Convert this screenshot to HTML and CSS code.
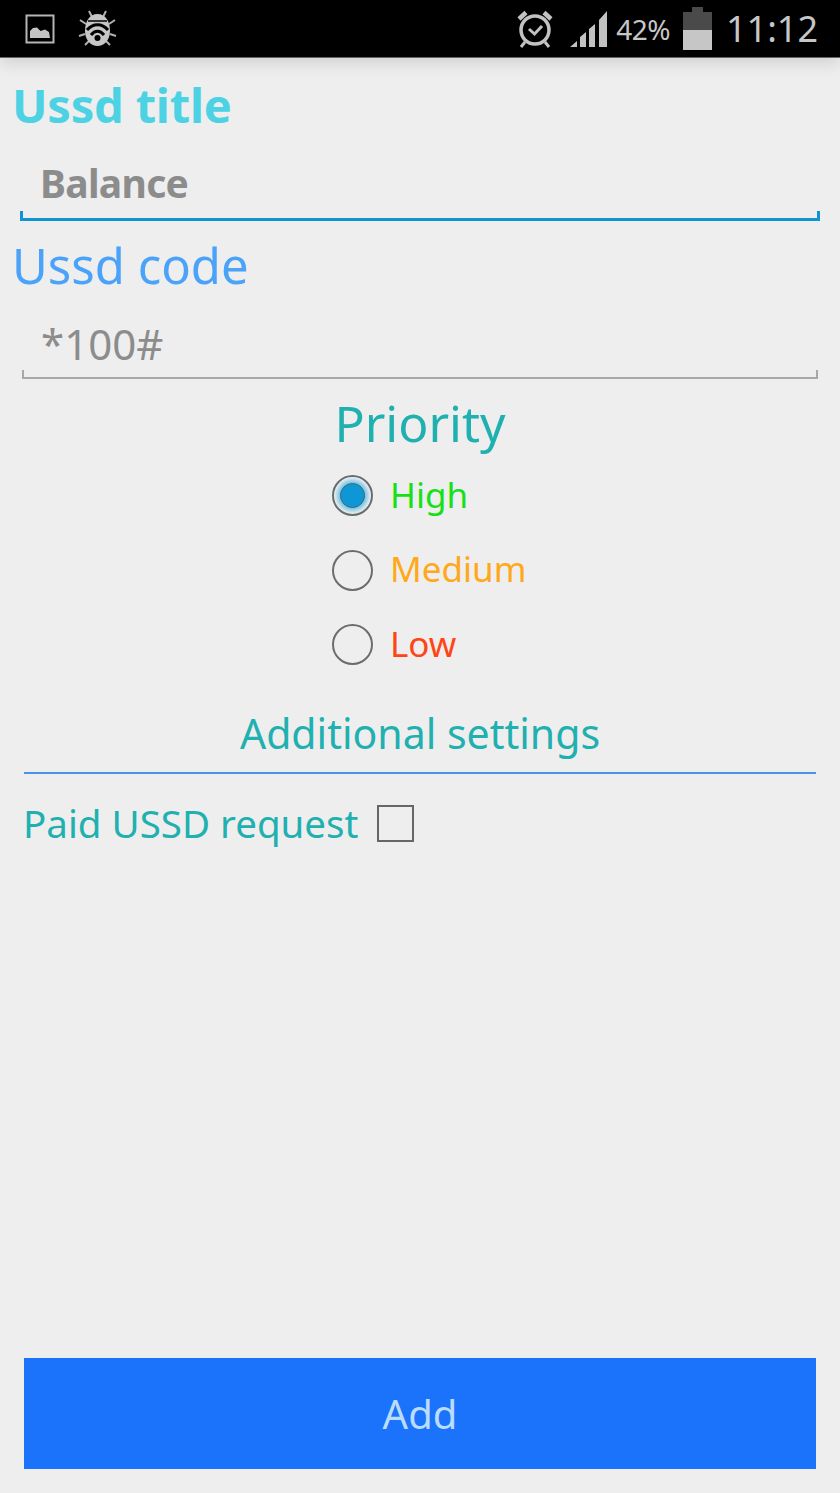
FILE: index.html
```html
<!DOCTYPE html>
<html lang="en">
<head>
    <meta charset="UTF-8">
    <meta name="viewport" content="width=device-width, initial-scale=1.0">
    <title>Add USSD</title>
    <link rel="stylesheet" href="styles.css">
</head>
<body>

    <div class="status-bar">
        <div class="status-left">
            <svg class="icon-picture" width="30" height="30" viewBox="0 0 30 30">
                <rect x="1.500" y="1.500" width="27" height="27" fill="none" stroke="#b5b5b5" stroke-width="2"/>
                <path d="M5 24 V17 L8 14 L12 13.500 L15.500 17 L20 15.500 L24 18 L25 24 Z" fill="#c4c4c4"/>
            </svg>
            <svg class="icon-bug" width="40" height="40" viewBox="0 0 40 40">
                <path d="M11 2 L14 8 M28 2 L25 8 M2 11 L8 15 M37 11 L31 15 M1 27 L7 25 M38 27 L32 25 M7 36 L11 32 M32 36 L28 32" stroke="#b0b0b0" stroke-width="2" fill="none"/>
                <path d="M19.500 5 C 11 5 7 13 7 22 C 7 31 13 37 19.500 37 C 26 37 32 31 32 22 C 32 13 28 5 19.500 5 Z" fill="#c6c6c6"/>
                <path d="M10 12 H29" stroke="#000" stroke-width="1.500"/>
                <path d="M9 21 C 15 14 24 14 30 21" stroke="#000" stroke-width="3" fill="none"/>
                <path d="M13 26 C 17 21 22 21 26 26" stroke="#000" stroke-width="3" fill="none"/>
                <circle cx="19.500" cy="29" r="3" fill="#000"/>
            </svg>
        </div>
        <div class="status-right">
            <svg class="icon-alarm" width="38" height="40" viewBox="0 0 38 40">
                <circle cx="19" cy="21" r="14" fill="none" stroke="#c2c2c2" stroke-width="3.500"/>
                <path d="M3 10 L10 3.500 M35 10 L28 3.500" stroke="#c2c2c2" stroke-width="4.500" fill="none"/>
                <path d="M9 33 L5 38 M29 33 L33 38" stroke="#c2c2c2" stroke-width="3" fill="none"/>
                <path d="M13 20 L18.500 25 L26 17" stroke="#c2c2c2" stroke-width="3" fill="none"/>
            </svg>
            <svg class="icon-signal" width="38" height="38" viewBox="0 0 38 38">
                <path d="M0 37 L7 31 V37 Z M10 37 V27 L16 22 V37 Z M19 37 V19 L25 14 V37 Z M29 37 V10 L37 1 V37 Z" fill="#c2c2c2"/>
            </svg>
            <span class="battery-text">42%</span>
            <div class="battery">
                <div class="battery-cap"></div>
                <div class="battery-body">
                    <div class="battery-fill"></div>
                </div>
            </div>
            <span class="clock">11:12</span>
        </div>
    </div>

    <div class="content">
        <h1 class="ussd-title">Ussd title</h1>
        <div class="field field-active">
            <span class="field-value-bold">Balance</span>
        </div>

        <h2 class="ussd-code">Ussd code</h2>
        <div class="field">
            <span class="field-value">*100#</span>
        </div>

        <h2 class="priority-title">Priority</h2>
        <div class="radio-group">
            <div class="radio-row">
                <span class="radio radio-checked"><span class="radio-dot"></span></span>
                <span class="radio-label high">High</span>
            </div>
            <div class="radio-row">
                <span class="radio"></span>
                <span class="radio-label medium">Medium</span>
            </div>
            <div class="radio-row">
                <span class="radio"></span>
                <span class="radio-label low">Low</span>
            </div>
        </div>

        <div class="settings-title">Additional settings</div>
        <div class="paid-row">
            <span class="paid-label">Paid USSD request</span>
            <span class="checkbox"></span>
        </div>

        <button class="add-btn">Add</button>
    </div>

</body>
</html>
```

FILE: styles.css
```css
:root {
    --mainBackground: #eeeeee;
    --teal: #20b0b0;
    --mainFont: "Noto Sans", "Open Sans", sans-serif;
}
* {
    box-sizing: border-box;
}
body {
    background-color: var(--mainBackground);
    font-family: var(--mainFont);
    margin: 0;
    padding: 0;
    height: 1493px;
    display: flex;
    flex-direction: column;
    overflow: hidden;
}
.status-bar {
    height: 58px;
    flex-shrink: 0;
    background-color: #000;
    border-bottom: 1px solid #666;
    box-shadow: 0 4px 16px rgba(0, 0, 0, 0.14);
    display: flex;
    justify-content: space-between;
    align-items: center;
    padding: 0 22px 0 25px;
    color: #c6c6c6;
}
.status-left {
    display: flex;
    align-items: center;
    gap: 23px;
}
.status-right {
    display: flex;
    align-items: center;
}
.icon-alarm {
    margin-right: 16px;
}
.icon-signal {
    margin-right: 8px;
}
.battery-text {
    font-size: 28px;
    line-height: 30px;
    letter-spacing: -0.5px;
    margin-right: 13px;
}
.battery {
    width: 29px;
    height: 43px;
    display: flex;
    flex-direction: column;
    align-items: center;
    margin-right: 14px;
}
.battery-cap {
    width: 11px;
    height: 5px;
    background-color: #4a4a4a;
}
.battery-body {
    flex: 1;
    width: 100%;
    background-color: #4a4a4a;
    display: flex;
    align-items: flex-end;
}
.battery-fill {
    width: 100%;
    height: 53%;
    background-color: #c6c6c6;
}
.clock {
    font-size: 36px;
    line-height: 40px;
}
.content {
    flex: 1;
    display: flex;
    flex-direction: column;
    padding: 21px 24px 24px;
}
.ussd-title {
    margin: 0 0 0 -12px;
    font-size: 47px;
    line-height: 52px;
    font-weight: 700;
    letter-spacing: -0.2px;
    color: #4dd2e4;
}
.field {
    margin: 0 -2px;
    height: 88px;
    padding: 16px 0 0 19px;
    display: flex;
    align-items: center;
    background:
        linear-gradient(#a8a8a8, #a8a8a8) left bottom / 100% 2px no-repeat,
        linear-gradient(#a8a8a8, #a8a8a8) left bottom / 2px 9px no-repeat,
        linear-gradient(#a8a8a8, #a8a8a8) right bottom / 2px 9px no-repeat;
}
.field-active {
    margin: 0 -4px;
    height: 90px;
    padding: 13px 0 0 20px;
    background:
        linear-gradient(#0e94d0, #0e94d0) left bottom / 100% 3px no-repeat,
        linear-gradient(#0e94d0, #0e94d0) left bottom / 3px 10px no-repeat,
        linear-gradient(#0e94d0, #0e94d0) right bottom / 3px 10px no-repeat;
}
.field-value-bold {
    font-size: 39px;
    font-weight: 700;
    letter-spacing: -0.7px;
    color: #8c8c8c;
}
.field-value {
    font-size: 42px;
    color: #8c8c8c;
}
.ussd-code {
    margin: 18px 0 0 -12px;
    font-size: 49px;
    line-height: 52px;
    font-weight: 400;
    color: #4aa3f8;
}
.priority-title {
    margin: 16px 0 0;
    font-size: 50px;
    line-height: 56px;
    font-weight: 400;
    text-align: center;
    color: var(--teal);
}
.radio-group {
    margin-top: 24px;
    padding-left: 308px;
    display: flex;
    flex-direction: column;
    gap: 33.500px;
}
.radio-row {
    height: 41px;
    display: flex;
    align-items: center;
    gap: 17px;
}
.radio {
    width: 41px;
    height: 41px;
    border: 2px solid #6c6c6c;
    border-radius: 50%;
    display: flex;
    align-items: center;
    justify-content: center;
    flex-shrink: 0;
}
.radio-checked {
    background: radial-gradient(closest-side, #6fb6d8 62%, #e8f3f7 100%);
}
.radio-dot {
    width: 25px;
    height: 25px;
    border-radius: 50%;
    background-color: #0f97d5;
    border: 1.500px solid #2a6f8f;
}
.radio-label {
    font-size: 35px;
    line-height: 41px;
    padding-bottom: 3px;
}
.high {
    color: #16e016;
}
.medium {
    color: #ffa81a;
}
.low {
    color: #ff4415;
}
.settings-title {
    margin-top: 44px;
    height: 65px;
    font-size: 41px;
    line-height: 49px;
    text-align: center;
    color: var(--teal);
    border-bottom: 2px solid #4a93ea;
}
.paid-row {
    margin-top: 27px;
    margin-left: -1px;
    display: flex;
    align-items: center;
    gap: 19px;
}
.paid-label {
    font-size: 38.500px;
    line-height: 44px;
    color: var(--teal);
}
.checkbox {
    width: 37px;
    height: 37px;
    border: 2px solid #666;
}
.add-btn {
    margin-top: auto;
    width: 100%;
    height: 111px;
    border: none;
    background-color: #1a73fa;
    color: #b9dcff;
    font-family: var(--mainFont);
    font-size: 40px;
    cursor: pointer;
}
```
